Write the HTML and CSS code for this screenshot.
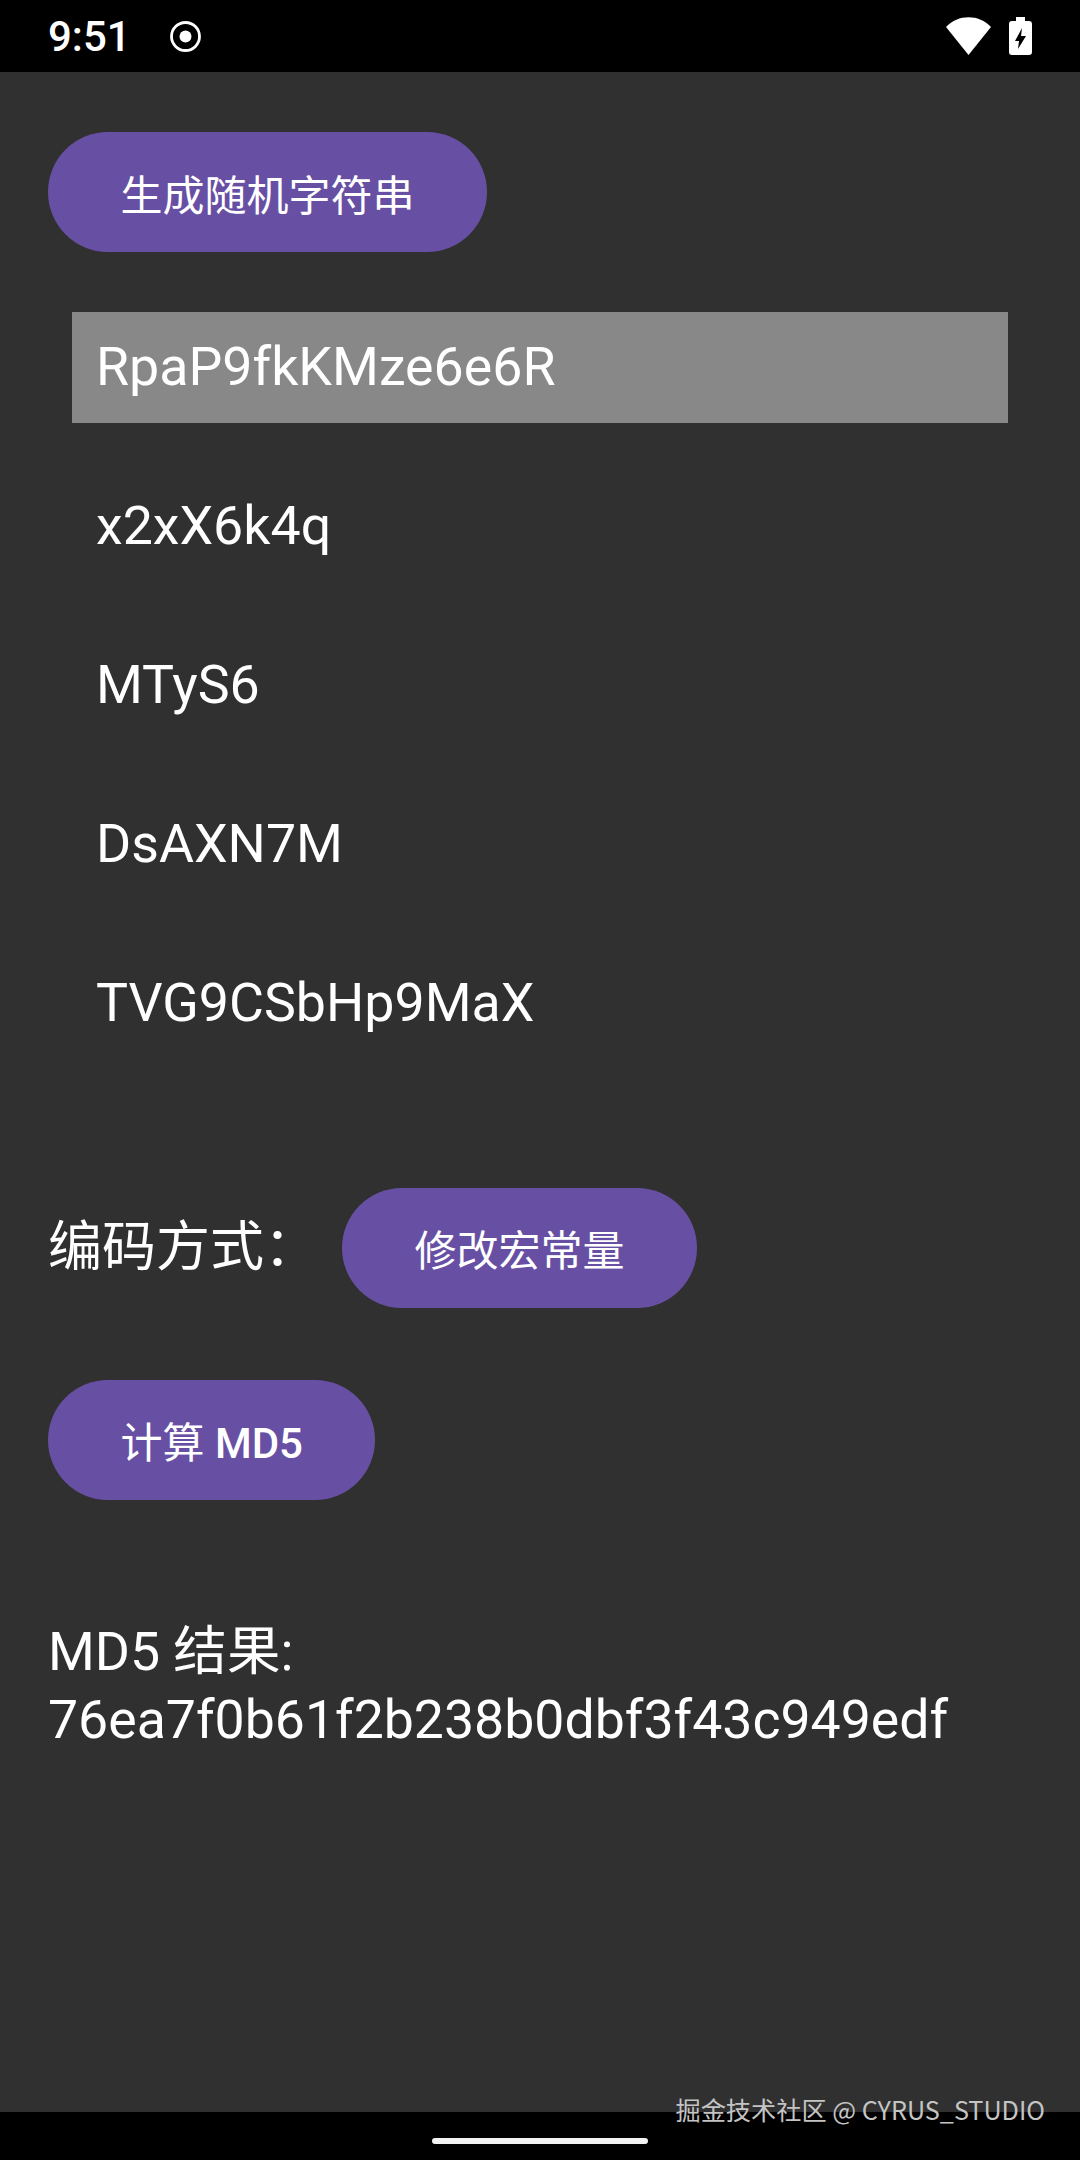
FILE: index.html
```html
<!DOCTYPE html>
<html>
<head>
    <title>MD5</title>
    <link rel="stylesheet" href="styles.css">
</head>
<body>
    <div class="status-bar">
        <span class="clock">9:51</span>
        <svg class="record-icon" width="31" height="31" viewBox="0 0 31 31">
            <circle cx="15.500" cy="15.500" r="14" fill="none" stroke="#fff" stroke-width="2.800"></circle>
            <circle cx="15.500" cy="15.500" r="6" fill="#fff"></circle>
        </svg>
        <div class="status-right">
            <svg width="45" height="38" viewBox="0 0 45 38">
                <path d="M0 10 C12 -3 33 -3 45 10 L22.500 38 Z" fill="#fff"></path>
            </svg>
            <svg width="23" height="38" viewBox="0 0 23 38">
                <path d="M7 0 H16 V4 H20 Q23 4 23 7 V35 Q23 38 20 38 H3 Q0 38 0 35 V7 Q0 4 3 4 H7 Z" fill="#fff"></path>
                <path d="M13 11 L6 24 H10 L9 32 L17 19 H12 Z" fill="#000"></path>
            </svg>
        </div>
    </div>

    <main class="content">
        <button class="pill pill-random">生成随机字符串</button>

        <ul class="string-list">
            <li class="string-item selected">RpaP9fkKMze6e6R</li>
            <li class="string-item">x2xX6k4q</li>
            <li class="string-item">MTyS6</li>
            <li class="string-item">DsAXN7M</li>
            <li class="string-item">TVG9CSbHp9MaX</li>
        </ul>

        <div class="encode-row">
            <span class="encode-label">编码方式：</span>
            <button class="pill">修改宏常量</button>
        </div>

        <button class="pill pill-md5">计算 <span class="latin">MD5</span></button>

        <p class="result">MD5 结果:<br>76ea7f0b61f2b238b0dbf3f43c949edf</p>
    </main>

    <div class="nav-bar">
        <div class="nav-pill"></div>
    </div>
    <div class="watermark">掘金技术社区 @ CYRUS_STUDIO</div>
</body>
</html>
```

FILE: styles.css
```css
/* Basic styling for the app */
* {
    box-sizing: border-box;
}

html, body {
    margin: 0;
    padding: 0;
}

body {
    width: 1080px;
    height: 2160px;
    display: flex;
    flex-direction: column;
    position: relative;
    overflow: hidden;
    background-color: #303030;
    color: #fff;
    font-family: Roboto, "Noto Sans CJK SC", sans-serif;
}

.status-bar {
    height: 72px;
    flex-shrink: 0;
    background-color: #000;
    display: flex;
    align-items: center;
    padding: 0 48px;
}

.clock {
    font-size: 42px;
    font-weight: 500;
    width: 122px;
}

.record-icon {
    display: block;
}

.status-right {
    margin-left: auto;
    display: flex;
    align-items: center;
    gap: 18px;
}

.content {
    flex: 1;
    padding: 60px 48px 0;
}

.pill {
    display: block;
    height: 120px;
    padding: 0 72.5px;
    border: none;
    border-radius: 60px;
    background-color: #6750a4;
    color: #fff;
    font-family: inherit;
    font-size: 42px;
    font-weight: 400;
}

.latin {
    font-weight: 500;
}

.string-list {
    list-style: none;
    margin: 60px 24px 0;
    padding: 0;
}

.string-item {
    height: 110.5px;
    margin-bottom: 48.5px;
    padding-left: 24px;
    line-height: 110px;
    font-size: 53.7px;
}

.selected {
    background-color: #888;
}

.encode-row {
    display: flex;
    align-items: center;
    margin-top: 129px;
}

.encode-label {
    width: 294px;
    padding-bottom: 10px;
    font-size: 54px;
}

.pill-md5 {
    margin-top: 72px;
}

.result {
    margin: 118px 0 0;
    font-size: 53.6px;
    line-height: 68px;
}

.nav-bar {
    height: 48px;
    flex-shrink: 0;
    background-color: #000;
    display: flex;
    justify-content: center;
    padding-top: 26px;
}

.nav-pill {
    width: 216px;
    height: 6px;
    border-radius: 3px;
    background-color: #f2f2f2;
}

.watermark {
    position: absolute;
    right: 35px;
    bottom: 33px;
    font-family: "Noto Sans CJK SC", sans-serif;
    font-size: 25.2px;
    color: #c4c4c4;
}
```
